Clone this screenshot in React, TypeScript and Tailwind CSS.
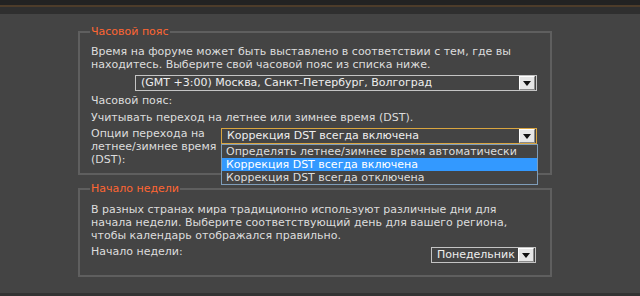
import React from "react";

const font = { fontFamily: '"DejaVu Sans", Verdana, sans-serif' };

function Arrow() {
  return (
    <div className="w-[16px] h-[14px] bg-[#e6e6e6] border-r border-b border-[#8a8a8a] border-t border-l border-t-white border-l-white flex items-center justify-center shrink-0">
      <svg width="8" height="5" viewBox="0 0 8 5">
        <polygon points="0,0 8,0 4,5" fill="#111" />
      </svg>
    </div>
  );
}

function Select({ text, w, gold }: { text: string; w: string; gold?: boolean }) {
  return (
    <div
      className={`${w} h-[16px] flex items-center justify-between pl-[5px] pr-[1px] border ${
        gold ? "border-[#d9a540]" : "border-[#c4c4c4]"
      }`}
    >
      <span className="text-[#eeeeee] text-[11px] leading-[14px] whitespace-nowrap">{text}</span>
      <Arrow />
    </div>
  );
}

export default function App() {
  return (
    <div className="w-[640px] h-[296px] bg-[#444444] flex flex-col overflow-hidden" style={font}>
      <div className="h-[5px] bg-[#222222]" />
      <div className="h-[2px] bg-[#4d3c2a]" />
      <div className="h-[7px] bg-[#2f2f2f]" />
      <div className="flex-1 pl-[78px] pt-[12px] relative">
        <fieldset className="w-[474px] border-2 border-[#5f5f5f] pl-[11px] pr-[10px] pb-[4px] h-[149px]">
          <legend className="text-[#ff6633] text-[11px] leading-[12px] px-[1px] -ml-[1px]">Часовой пояс</legend>
          <div className="text-[#dddddd] text-[11px] leading-[13px] mt-[7px]">
            Время на форуме может быть выставлено в соответствии с тем, где вы находитесь. Выберите свой часовой пояс из списка ниже.
          </div>
          <div className="mt-[4px] ml-[44px]">
            <Select w="w-[402px]" text="(GMT +3:00) Москва, Санкт-Петербург, Волгоград" />
          </div>
          <div className="text-[#dddddd] text-[11px] leading-[13px] mt-[3px]">Часовой пояс:</div>
          <div className="text-[#dddddd] text-[11px] leading-[13px] mt-[4px]">
            Учитывать переход на летнее или зимнее время (DST).
          </div>
          <div className="flex mt-[3px]">
            <div className="w-[130px] text-[#dddddd] text-[11px] leading-[13px]">
              Опции перехода на летнее/зимнее время (DST):
            </div>
            <div className="pt-[1px]">
              <Select gold w="w-[316px]" text="Коррекция DST всегда включена" />
            </div>
          </div>
        </fieldset>
        <fieldset className="mt-[8px] w-[474px] border-2 border-[#5f5f5f] pl-[11px] pr-[14px] h-[94px]">
          <legend className="text-[#ff6633] text-[11px] leading-[12px] px-[1px] -ml-[1px]">Начало недели</legend>
          <div className="text-[#dddddd] text-[11px] leading-[13px] mt-[8px]">
            В разных странах мира традиционно используют различные дни для начала недели. Выберите соответствующий день для вашего региона, чтобы календарь отображался правильно.
          </div>
          <div className="flex justify-between items-start mt-[3px]">
            <div className="text-[#dddddd] text-[11px] leading-[13px]">Начало недели:</div>
            <div className="mt-[2px]">
              <Select w="w-[105px]" text="Понедельник" />
            </div>
          </div>
        </fieldset>
        <div className="absolute left-[221px] top-[130px] w-[317px] border border-[#7f9db9] bg-[#444444] text-[11px] leading-[13px] text-[#dddddd]">
          <div className="pl-[4px] h-[13px]">Определять летнее/зимнее время автоматически</div>
          <div className="pl-[4px] h-[13px] bg-[#3399ff] text-white">Коррекция DST всегда включена</div>
          <div className="pl-[4px] h-[13px]">Коррекция DST всегда отключена</div>
        </div>
      </div>
      <div className="h-[3px] bg-[#333333]" />
    </div>
  );
}
